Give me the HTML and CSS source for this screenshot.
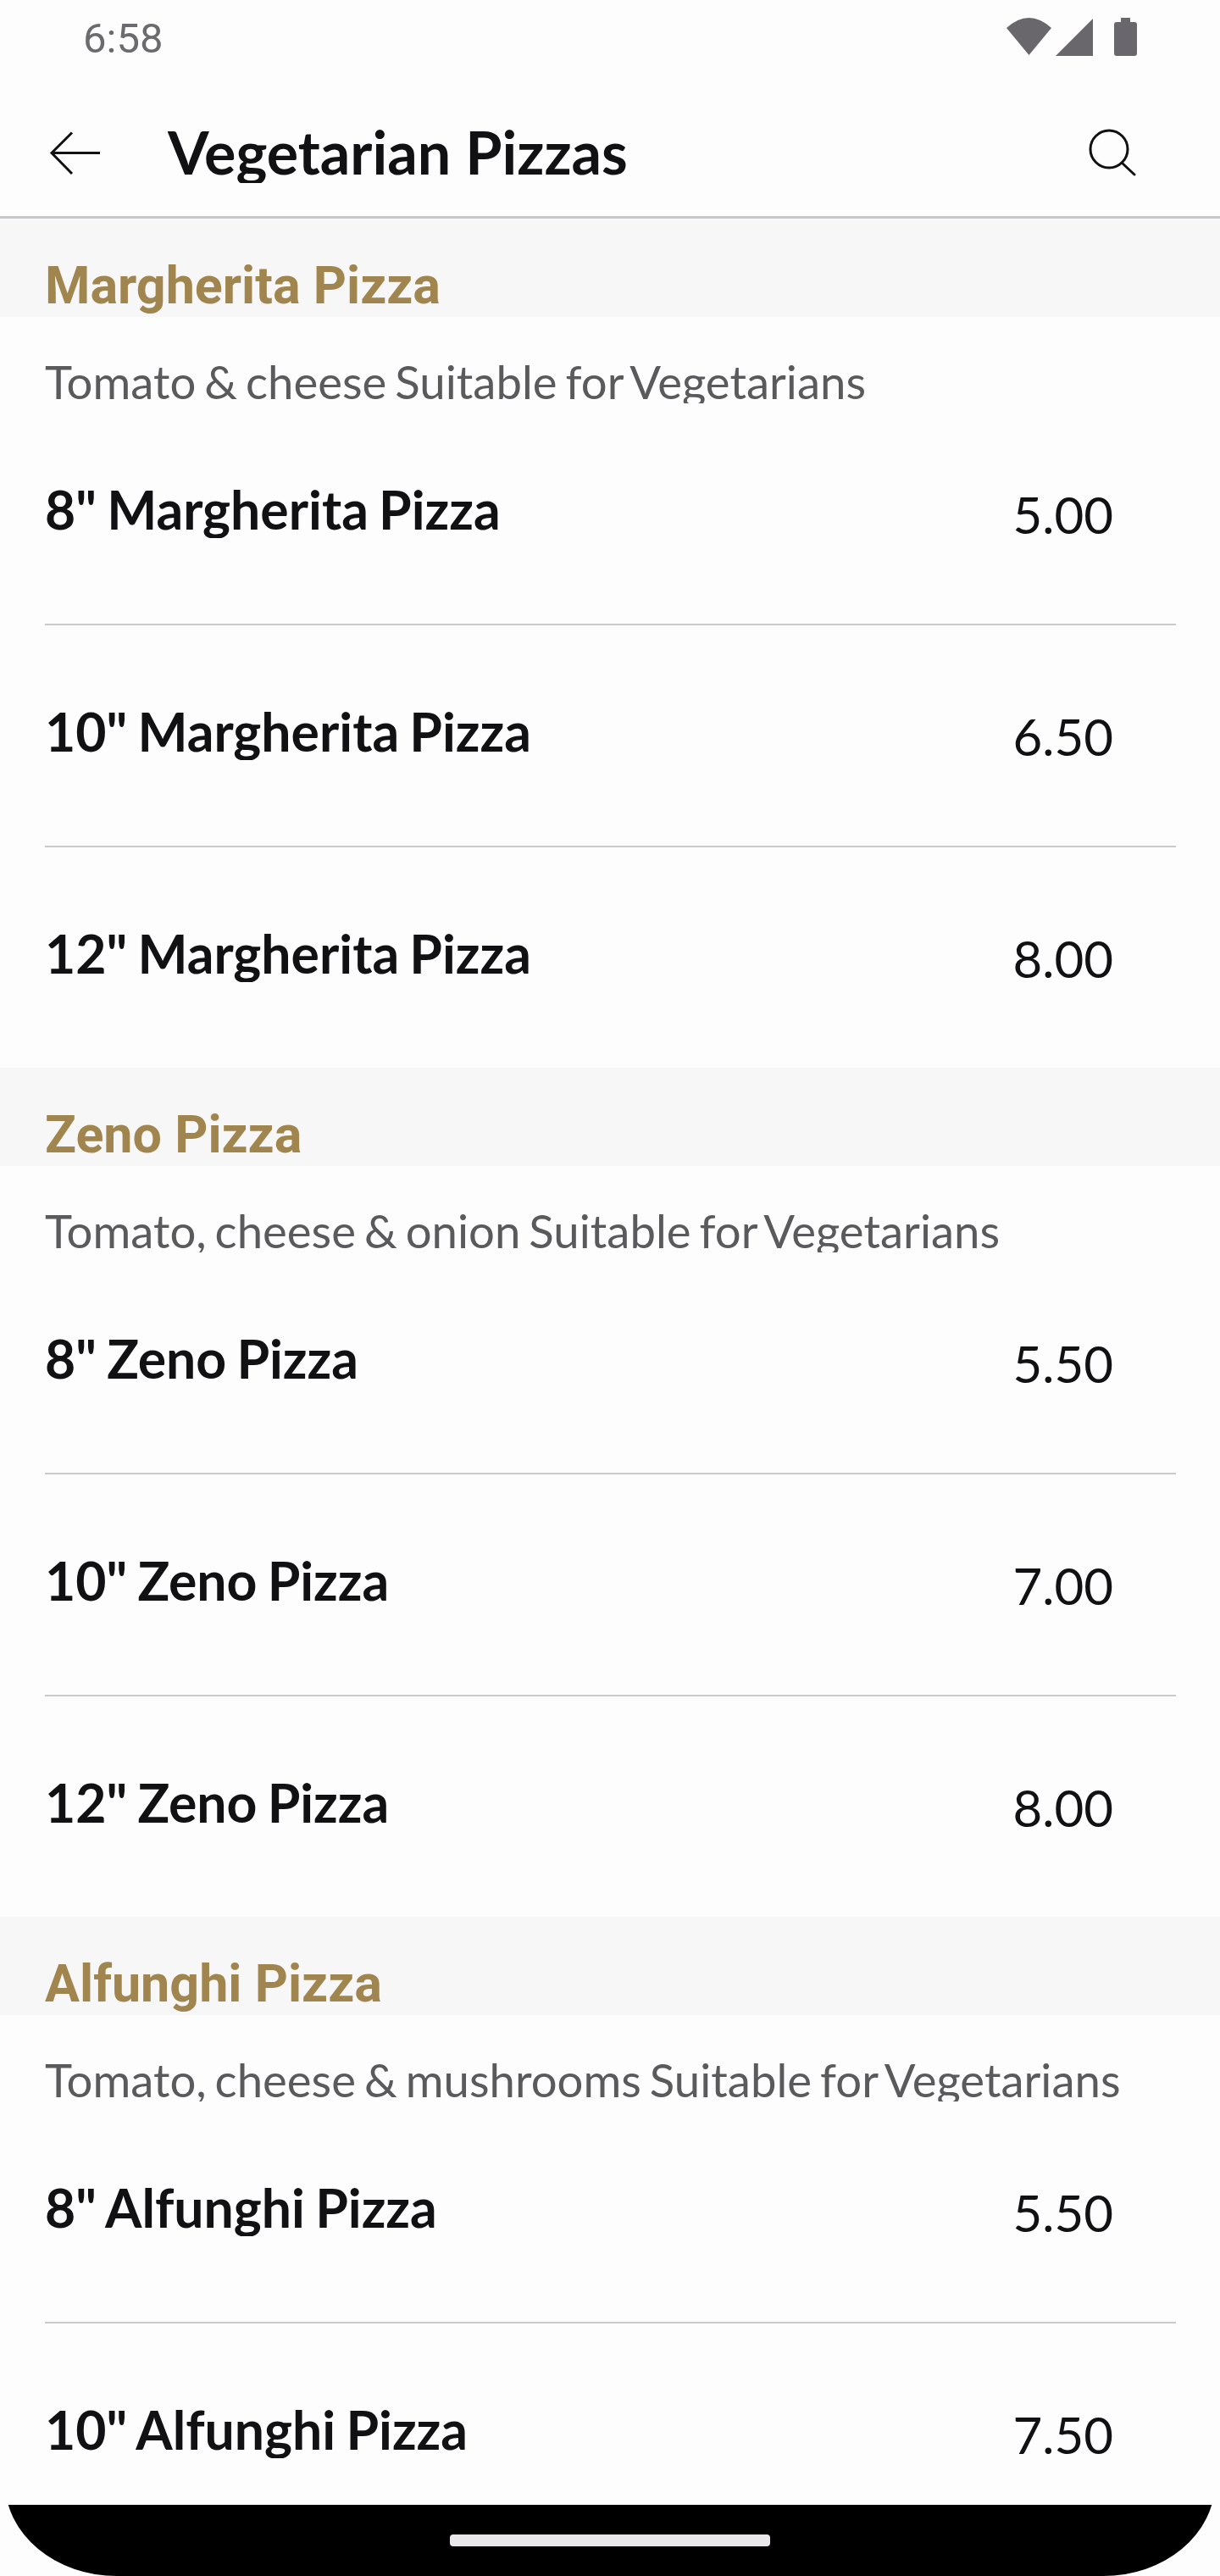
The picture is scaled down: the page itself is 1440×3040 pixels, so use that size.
FILE: index.html
```html
<!DOCTYPE html>
<html lang="en">
<head>
    <meta charset="UTF-8">
    <meta name="viewport" content="width=device-width, initial-scale=1.0">
    <title>Vegetarian Pizzas</title>
    <link rel="stylesheet" href="styles.css">
</head>
<body>

    <!-- Top bars -->
    <header class="app-header">
        <div class="status-bar">
            <span class="status-time">6:58</span>
            <div class="status-icons">
                <svg class="icon-wifi" viewBox="0 0 53 44"><path d="M26.5 44L0 12Q26.5 -12 53 12Z"/></svg>
                <svg class="icon-signal" viewBox="0 0 44 44"><path d="M0 44L44 0V44Z"/></svg>
                <svg class="icon-battery" viewBox="0 0 27 45"><path d="M8 0H19V5H24Q27 5 27 8V42Q27 45 24 45H3Q0 45 0 42V8Q0 5 3 5H8Z"/></svg>
            </div>
        </div>
        <div class="toolbar">
            <svg class="icon-back" viewBox="0 0 60 52"><path d="M60 25.5H3M27 1.5L3 25.5L27 50"/></svg>
            <h1 class="page-title">Vegetarian Pizzas</h1>
            <svg class="icon-search" viewBox="0 0 60 60"><circle cx="24" cy="24" r="22"/><path d="M39 40L54 54"/></svg>
        </div>
    </header>

    <main>
        <!-- Margherita -->
        <section class="menu-section">
            <h2 class="section-title">Margherita Pizza</h2>
            <p class="section-desc">Tomato &amp; cheese Suitable for Vegetarians</p>
            <div class="menu-row">
                <span class="item-name">8" Margherita Pizza</span>
                <span class="item-price">5.00</span>
            </div>
            <div class="menu-row">
                <span class="item-name">10" Margherita Pizza</span>
                <span class="item-price">6.50</span>
            </div>
            <div class="menu-row">
                <span class="item-name">12" Margherita Pizza</span>
                <span class="item-price">8.00</span>
            </div>
        </section>

        <!-- Zeno -->
        <section class="menu-section">
            <h2 class="section-title">Zeno Pizza</h2>
            <p class="section-desc">Tomato, cheese &amp; onion Suitable for Vegetarians</p>
            <div class="menu-row">
                <span class="item-name">8" Zeno Pizza</span>
                <span class="item-price">5.50</span>
            </div>
            <div class="menu-row">
                <span class="item-name">10" Zeno Pizza</span>
                <span class="item-price">7.00</span>
            </div>
            <div class="menu-row">
                <span class="item-name">12" Zeno Pizza</span>
                <span class="item-price">8.00</span>
            </div>
        </section>

        <!-- Alfunghi -->
        <section class="menu-section">
            <h2 class="section-title">Alfunghi Pizza</h2>
            <p class="section-desc">Tomato, cheese &amp; mushrooms Suitable for Vegetarians</p>
            <div class="menu-row">
                <span class="item-name">8" Alfunghi Pizza</span>
                <span class="item-price">5.50</span>
            </div>
            <div class="menu-row">
                <span class="item-name">10" Alfunghi Pizza</span>
                <span class="item-price">7.50</span>
            </div>
        </section>
    </main>

    <!-- Gesture bar sits over the list -->
    <div class="gesture-bar">
        <div class="gesture-pill"></div>
    </div>

</body>
</html>
```

FILE: styles.css
```css
html, body {
    margin: 0;
    padding: 0;
}

body {
    position: relative;
    height: 3040px;
    overflow: hidden;
    background: #fefdfe;
    font-family: 'Lato', sans-serif;
    color: #111013;
}

/* Top bars */
.app-header {
    height: 258px;
    box-sizing: border-box;
    border-bottom: 3px solid #c9c7cb;
}

.status-bar {
    height: 142px;
    box-sizing: border-box;
    display: flex;
    justify-content: space-between;
    align-items: flex-start;
    padding: 18px 98px 0 98px;
}

.status-time {
    font-family: 'Roboto', sans-serif;
    font-size: 49px;
    line-height: 56px;
    color: #6b6a6e;
}

.status-icons {
    display: flex;
    align-items: flex-start;
    margin-top: 3px;
}

.status-icons svg {
    fill: #69676b;
    display: block;
}

.icon-wifi {
    width: 53px;
    height: 44px;
}

.icon-signal {
    width: 44px;
    height: 44px;
    margin: 1px 25px 0 5px;
}

.icon-battery {
    width: 27px;
    height: 45px;
}

.toolbar {
    display: flex;
    align-items: flex-start;
}

.icon-back {
    width: 60px;
    height: 52px;
    margin: 13px 80px 0 58px;
    fill: none;
    stroke: #111013;
    stroke-width: 3;
}

.page-title {
    flex: 1;
    margin: 0;
    font-size: 70px;
    font-weight: 700;
    line-height: 74px;
    height: 74px;
    overflow: hidden;
}

.icon-search {
    width: 60px;
    height: 60px;
    margin: 10px 95px 0 0;
    fill: none;
    stroke: #111013;
    stroke-width: 3;
    stroke-linecap: round;
}

/* Menu sections */
.section-title {
    margin: 0;
    height: 116px;
    box-sizing: border-box;
    padding: 44px 0 0 53px;
    background: #f8f7f8;
    font-family: 'Roboto', sans-serif;
    font-size: 61px;
    font-weight: 700;
    line-height: 70px;
    color: #a0854e;
}

.section-desc {
    margin: 0;
    height: 102px;
    box-sizing: border-box;
    padding: 50px 0 0 53px;
    font-size: 54.5px;
    line-height: 52px;
    word-spacing: -4px;
    color: #5a595c;
    overflow: hidden;
}

.menu-row {
    height: 262px;
    box-sizing: border-box;
    margin: 0 52px 0 53px;
    display: flex;
    justify-content: space-between;
    align-items: flex-start;
    border-bottom: 2px solid #c9c8ca;
}

.menu-row:last-child {
    height: 260px;
    border-bottom: none;
}

.item-name {
    margin-top: 91px;
    height: 68px;
    font-size: 62.5px;
    font-weight: 700;
    line-height: 68px;
    word-spacing: -3px;
    overflow: hidden;
}

.item-price {
    margin: 99px 74px 0 0;
    font-size: 60px;
    line-height: 64px;
}

/* Gesture bar: a tall rounded shape cut off by its wrapper at the top */
.gesture-bar {
    position: absolute;
    left: 0;
    right: 0;
    bottom: 0;
    height: 84px;
    overflow: hidden;
}

.gesture-bar::before {
    content: "";
    position: absolute;
    left: 6px;
    right: 6px;
    bottom: 0;
    height: 110px;
    background: #000;
    border-radius: 0 0 132px 132px / 0 0 110px 110px;
}

.gesture-pill {
    position: absolute;
    left: 531px;
    top: 35px;
    width: 378px;
    height: 14px;
    border-radius: 4px;
    background: #e9e7ea;
}
```
